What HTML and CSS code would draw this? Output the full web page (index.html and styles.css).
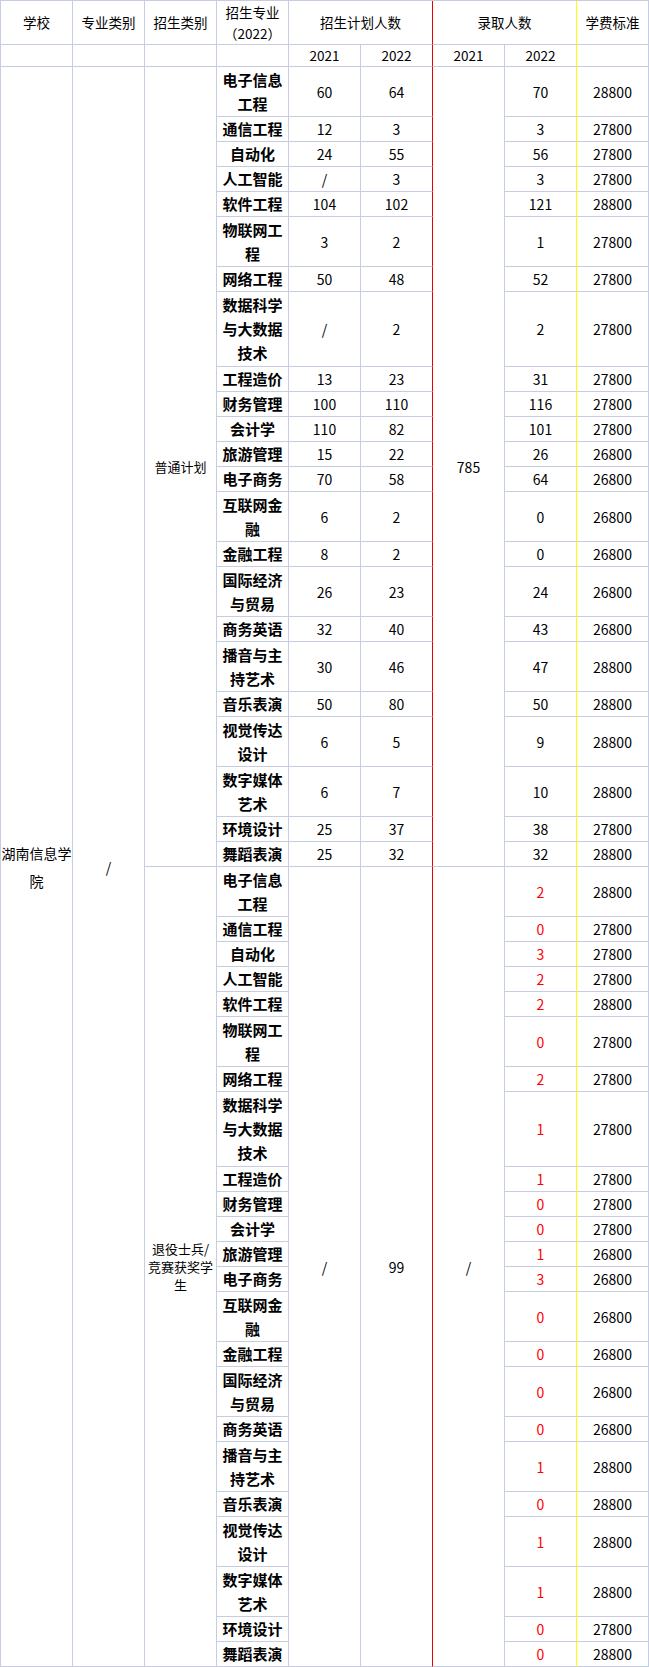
FILE: index.html
```html
<!DOCTYPE html>
<html lang="zh-CN">
<head>
<meta charset="utf-8">
<title>湖南信息学院 招生计划与录取人数</title>
<link rel="stylesheet" href="styles.css">
</head>
<body>
<table class="plan">
  <colgroup>
    <col><col><col><col><col><col><col><col><col>
  </colgroup>
  <thead>
    <tr class="hd1">
      <th>学校</th>
      <th>专业类别</th>
      <th>招生类别</th>
      <th>招生专业<br>（2022）</th>
      <th colspan="2" class="red">招生计划人数</th>
      <th colspan="2" class="yel">录取人数</th>
      <th>学费标准</th>
    </tr>
    <tr class="hd2">
      <th></th><th></th><th></th><th></th>
      <th>2021</th><th class="red">2022</th>
      <th>2021</th><th class="yel">2022</th>
      <th></th>
    </tr>
  </thead>
  <tbody>
    <tr class="h2">
      <td rowspan="46" class="school">湖南信息学院</td>
      <td rowspan="46">/</td>
      <td rowspan="23" class="kind">普通计划</td>
      <td class="major">电子信息工程</td><td>60</td><td class="red">64</td>
      <td rowspan="23">785</td>
      <td class="yel">70</td><td>28800</td>
    </tr>
    <tr class="h1"><td class="major">通信工程</td><td>12</td><td class="red">3</td><td class="yel">3</td><td>27800</td></tr>
    <tr class="h1"><td class="major">自动化</td><td>24</td><td class="red">55</td><td class="yel">56</td><td>27800</td></tr>
    <tr class="h1"><td class="major">人工智能</td><td>/</td><td class="red">3</td><td class="yel">3</td><td>27800</td></tr>
    <tr class="h1"><td class="major">软件工程</td><td>104</td><td class="red">102</td><td class="yel">121</td><td>28800</td></tr>
    <tr class="h2"><td class="major">物联网工程</td><td>3</td><td class="red">2</td><td class="yel">1</td><td>27800</td></tr>
    <tr class="h1"><td class="major">网络工程</td><td>50</td><td class="red">48</td><td class="yel">52</td><td>27800</td></tr>
    <tr class="h3"><td class="major">数据科学与大数据技术</td><td>/</td><td class="red">2</td><td class="yel">2</td><td>27800</td></tr>
    <tr class="h1"><td class="major">工程造价</td><td>13</td><td class="red">23</td><td class="yel">31</td><td>27800</td></tr>
    <tr class="h1"><td class="major">财务管理</td><td>100</td><td class="red">110</td><td class="yel">116</td><td>27800</td></tr>
    <tr class="h1"><td class="major">会计学</td><td>110</td><td class="red">82</td><td class="yel">101</td><td>27800</td></tr>
    <tr class="h1"><td class="major">旅游管理</td><td>15</td><td class="red">22</td><td class="yel">26</td><td>26800</td></tr>
    <tr class="h1"><td class="major">电子商务</td><td>70</td><td class="red">58</td><td class="yel">64</td><td>26800</td></tr>
    <tr class="h2"><td class="major">互联网金融</td><td>6</td><td class="red">2</td><td class="yel">0</td><td>26800</td></tr>
    <tr class="h1"><td class="major">金融工程</td><td>8</td><td class="red">2</td><td class="yel">0</td><td>26800</td></tr>
    <tr class="h2"><td class="major">国际经济与贸易</td><td>26</td><td class="red">23</td><td class="yel">24</td><td>26800</td></tr>
    <tr class="h1"><td class="major">商务英语</td><td>32</td><td class="red">40</td><td class="yel">43</td><td>26800</td></tr>
    <tr class="h2"><td class="major">播音与主持艺术</td><td>30</td><td class="red">46</td><td class="yel">47</td><td>28800</td></tr>
    <tr class="h1"><td class="major">音乐表演</td><td>50</td><td class="red">80</td><td class="yel">50</td><td>28800</td></tr>
    <tr class="h2"><td class="major">视觉传达设计</td><td>6</td><td class="red">5</td><td class="yel">9</td><td>28800</td></tr>
    <tr class="h2"><td class="major">数字媒体艺术</td><td>6</td><td class="red">7</td><td class="yel">10</td><td>28800</td></tr>
    <tr class="h1"><td class="major">环境设计</td><td>25</td><td class="red">37</td><td class="yel">38</td><td>27800</td></tr>
    <tr class="h1"><td class="major">舞蹈表演</td><td>25</td><td class="red">32</td><td class="yel">32</td><td>28800</td></tr>

    <tr class="h2">
      <td rowspan="23" class="kind kind2">退役士兵/竞赛获奖学生</td>
      <td class="major">电子信息工程</td>
      <td rowspan="23">/</td>
      <td rowspan="23" class="red">99</td>
      <td rowspan="23">/</td>
      <td class="yel hot">2</td><td>28800</td>
    </tr>
    <tr class="h1"><td class="major">通信工程</td><td class="yel hot">0</td><td>27800</td></tr>
    <tr class="h1"><td class="major">自动化</td><td class="yel hot">3</td><td>27800</td></tr>
    <tr class="h1"><td class="major">人工智能</td><td class="yel hot">2</td><td>27800</td></tr>
    <tr class="h1"><td class="major">软件工程</td><td class="yel hot">2</td><td>28800</td></tr>
    <tr class="h2"><td class="major">物联网工程</td><td class="yel hot">0</td><td>27800</td></tr>
    <tr class="h1"><td class="major">网络工程</td><td class="yel hot">2</td><td>27800</td></tr>
    <tr class="h3"><td class="major">数据科学与大数据技术</td><td class="yel hot">1</td><td>27800</td></tr>
    <tr class="h1"><td class="major">工程造价</td><td class="yel hot">1</td><td>27800</td></tr>
    <tr class="h1"><td class="major">财务管理</td><td class="yel hot">0</td><td>27800</td></tr>
    <tr class="h1"><td class="major">会计学</td><td class="yel hot">0</td><td>27800</td></tr>
    <tr class="h1"><td class="major">旅游管理</td><td class="yel hot">1</td><td>26800</td></tr>
    <tr class="h1"><td class="major">电子商务</td><td class="yel hot">3</td><td>26800</td></tr>
    <tr class="h2"><td class="major">互联网金融</td><td class="yel hot">0</td><td>26800</td></tr>
    <tr class="h1"><td class="major">金融工程</td><td class="yel hot">0</td><td>26800</td></tr>
    <tr class="h2"><td class="major">国际经济与贸易</td><td class="yel hot">0</td><td>26800</td></tr>
    <tr class="h1"><td class="major">商务英语</td><td class="yel hot">0</td><td>26800</td></tr>
    <tr class="h2"><td class="major">播音与主持艺术</td><td class="yel hot">1</td><td>28800</td></tr>
    <tr class="h1"><td class="major">音乐表演</td><td class="yel hot">0</td><td>28800</td></tr>
    <tr class="h2"><td class="major">视觉传达设计</td><td class="yel hot">1</td><td>28800</td></tr>
    <tr class="h2"><td class="major">数字媒体艺术</td><td class="yel hot">1</td><td>28800</td></tr>
    <tr class="h1"><td class="major">环境设计</td><td class="yel hot">0</td><td>27800</td></tr>
    <tr class="h1"><td class="major">舞蹈表演</td><td class="yel hot">0</td><td>28800</td></tr>
  </tbody>
</table>
</body>
</html>
```

FILE: styles.css
```css
html, body {
  margin: 0;
  padding: 0;
  background: #ffffff;
}

.plan {
  width: 649px;
  table-layout: fixed;
  border-collapse: separate;
  border-spacing: 0;
  border-top: 1px solid #c6cde0;
  border-left: 1px solid #c6cde0;
  font-family: "Noto Sans CJK SC", "Noto Sans", sans-serif;
  color: #000;
}

.plan col {
  width: 72px;
}

.plan th,
.plan td {
  box-sizing: border-box;
  padding: 0;
  border-right: 1px solid #c6cde0;
  border-bottom: 1px solid #c6cde0;
  text-align: center;
  vertical-align: middle;
  overflow: hidden;
}

.plan th {
  font-weight: normal;
  font-size: 13.5px;
  line-height: 21px;
  padding: 0 2px;
  text-spacing-trim: space-all;
}

.hd1 { height: 44px; }
.hd2 { height: 22px; }
.h1 { height: 25px; }
.h2 { height: 50px; }
.h3 { height: 75px; }

.plan td {
  font-size: 14px;
  line-height: 24px;
}

.plan td.major {
  font-size: 15px;
  font-weight: bold;
  line-height: 24px;
  padding: 0 2px;
}

.plan td.school {
  font-size: 14px;
  line-height: 28px;
}

.plan td.kind {
  font-size: 13px;
  line-height: 18px;
  padding: 0 2px;
}

.plan .red {
  border-right-color: #ee0000;
}

.plan .yel {
  border-right-color: #ffff00;
}

.plan td.hot {
  color: #ff0000;
}
```
